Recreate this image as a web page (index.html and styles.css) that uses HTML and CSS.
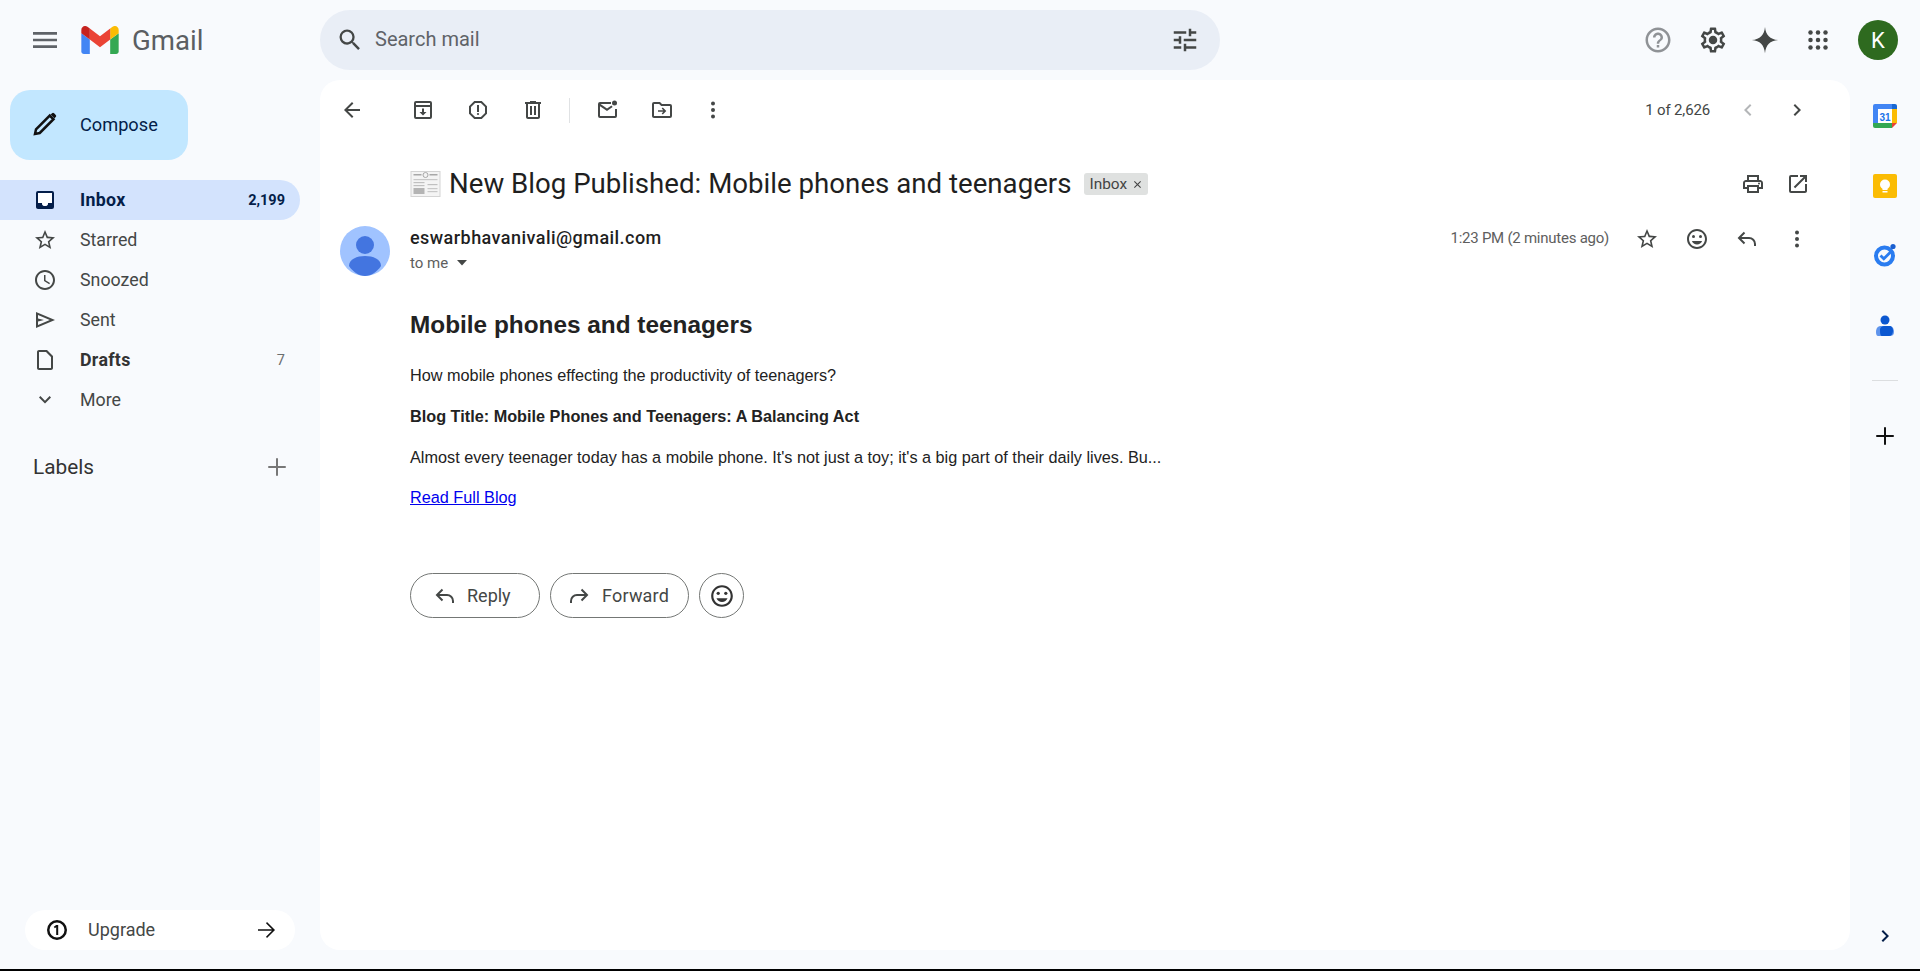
FILE: index.html
```html
<!DOCTYPE html>
<html lang="en">
<head>
<meta charset="utf-8">
<title>Gmail</title>
<link rel="stylesheet" href="styles.css">
</head>
<body>
<div class="app">
  <header class="topbar">
    <div class="brand">
      <svg class="menu" viewBox="0 0 24 24"><path d="M3 18h18v-2H3v2zm0-5h18v-2H3v2zm0-7v2h18V6H3z"/></svg>
      <svg class="logo" viewBox="52 42 88 66"><path fill="#4285f4" d="M58 108h14V74L52 59v43c0 3.32 2.69 6 6 6"/><path fill="#34a853" d="M120 108h14c3.32 0 6-2.69 6-6V59l-20 15"/><path fill="#fbbc04" d="M120 48v26l20-15v-8c0-7.42-8.47-11.65-14.4-7.2"/><path fill="#ea4335" d="M72 74V48l24 18 24-18v26L96 92"/><path fill="#c5221f" d="M52 51v8l20 15V48l-5.6-4.2c-5.94-4.45-14.4-.22-14.4 7.2"/></svg>
      <span class="wordmark">Gmail</span>
    </div>
    <div class="search">
      <svg class="ic28" viewBox="0 0 24 24"><path d="M15.5 14h-.79l-.28-.27A6.471 6.471 0 0 0 16 9.5 6.5 6.5 0 1 0 9.5 16c1.61 0 3.09-.59 4.23-1.57l.27.28v.79l5 4.99L20.49 19l-4.99-5zm-6 0C7.01 14 5 11.99 5 9.5S7.01 5 9.5 5 14 7.01 14 9.5 11.99 14 9.5 14z"/></svg>
      <span class="search-text">Search mail</span>
      <svg class="ic30" viewBox="0 0 24 24"><path d="M3 17v2h6v-2H3zM3 5v2h10V5H3zm10 16v-2h8v-2h-8v-2h-2v6h2zM7 9v2H3v2h4v2h2V9H7zm14 4v-2H11v2h10zm-6-4h2V7h4V5h-4V3h-2v6z"/></svg>
    </div>
    <div class="top-actions">
      <svg class="ic30 muted" viewBox="0 0 24 24"><path d="M11 18h2v-2h-2v2zm1-16C6.48 2 2 6.48 2 12s4.48 10 10 10 10-4.48 10-10S17.52 2 12 2zm0 18c-4.41 0-8-3.59-8-8s3.59-8 8-8 8 3.59 8 8-3.59 8-8 8zm0-14c-2.21 0-4 1.79-4 4h2c0-1.1.9-2 2-2s2 .9 2 2c0 2-3 1.75-3 5h2c0-2.25 3-2.5 3-5 0-2.21-1.79-4-4-4z"/></svg>
      <svg class="ic30 gear" viewBox="0 0 24 24"><path d="M19.43 12.98c.04-.32.07-.64.07-.98 0-.34-.03-.66-.07-.98l2.11-1.65c.19-.15.24-.42.12-.64l-2-3.46a.5.5 0 0 0-.61-.22l-2.49 1c-.52-.4-1.08-.73-1.69-.98l-.38-2.65A.488.488 0 0 0 14 2h-4c-.25 0-.46.18-.49.42l-.38 2.65c-.61.25-1.17.59-1.69.98l-2.49-1a.566.566 0 0 0-.18-.03c-.17 0-.34.09-.43.25l-2 3.46c-.13.22-.07.49.12.64l2.11 1.65c-.04.32-.07.65-.07.98 0 .33.03.66.07.98l-2.11 1.65c-.19.15-.24.42-.12.64l2 3.46a.5.5 0 0 0 .61.22l2.49-1c.52.4 1.08.73 1.69.98l.38 2.65c.03.24.24.42.49.42h4c.25 0 .46-.18.49-.42l.38-2.65c.61-.25 1.17-.59 1.69-.98l2.49 1c.06.02.12.03.18.03.17 0 .34-.09.43-.25l2-3.46c.12-.22.07-.49-.12-.64l-2.11-1.65zm-1.98-1.71c.04.31.05.52.05.73 0 .21-.02.43-.05.73l-.14 1.13.89.7 1.08.84-.7 1.21-1.27-.51-1.04-.42-.9.68c-.43.32-.84.56-1.25.73l-1.06.43-.16 1.13-.2 1.35h-1.4l-.19-1.35-.16-1.13-1.06-.43c-.43-.18-.83-.41-1.23-.71l-.91-.7-1.06.43-1.27.51-.7-1.21 1.08-.84.89-.7-.14-1.13c-.03-.31-.05-.54-.05-.74s.02-.43.05-.73l.14-1.13-.89-.7-1.08-.84.7-1.21 1.27.51 1.04.42.9-.68c.43-.32.84-.56 1.25-.73l1.06-.43.16-1.13.2-1.35h1.39l.19 1.35.16 1.13 1.06.43c.43.18.83.41 1.23.71l.91.7 1.06-.43 1.27-.51.7 1.21-1.07.85-.89.7.14 1.13z"/><circle cx="12" cy="12" r="3.4"/></svg>
      <svg class="ic30 spark" viewBox="0 0 24 24"><path d="M12 1.5c.7 6.6 3.9 9.8 10.5 10.5-6.6.7-9.800 3.900-10.500 10.500C11.300 15.900 8.100 12.700 1.500 12 8.100 11.300 11.300 8.100 12 1.500z"/></svg>
      <svg class="ic30" viewBox="0 0 24 24"><circle cx="6" cy="6" r="1.800"/><circle cx="12" cy="6" r="1.800"/><circle cx="18" cy="6" r="1.800"/><circle cx="6" cy="12" r="1.800"/><circle cx="12" cy="12" r="1.800"/><circle cx="18" cy="12" r="1.800"/><circle cx="6" cy="18" r="1.800"/><circle cx="12" cy="18" r="1.800"/><circle cx="18" cy="18" r="1.800"/></svg>
      <div class="account">K</div>
    </div>
  </header>

  <div class="workspace">
    <aside class="sidebar">
      <button class="compose">
        <svg class="ic30" viewBox="0 0 24 24"><path class="pencil" d="M4 20l.8-3.800L15.800 5.200l3 3L7.800 19.200z"/><path class="pencil-tip" d="M16.600 4.400l1-1a1.200 1.200 0 0 1 1.700 0l1.300 1.300a1.200 1.200 0 0 1 0 1.700l-1 1z"/></svg>
        <span>Compose</span>
      </button>
      <nav class="nav">
        <a class="nav-row active">
          <svg class="ic24" viewBox="0 0 24 24"><path d="M19 3H5a2 2 0 0 0-2 2v14c0 1.100.9 2 2 2h14a2 2 0 0 0 2-2V5a2 2 0 0 0-2-2zm0 12h-4a3 3 0 0 1-6 0H5V5h14v10z"/><path d="M5 5h14v10h-4a3 3 0 0 1-6 0H5z" fill="#fff"/></svg>
          <span class="nav-label">Inbox</span><span class="nav-count">2,199</span>
        </a>
        <a class="nav-row">
          <svg class="ic24" viewBox="0 0 24 24"><path d="M22 9.240l-7.190-.620L12 2 9.190 8.630 2 9.240l5.460 4.730L5.820 21 12 17.270 18.180 21l-1.630-7.030L22 9.240zM12 15.400l-3.760 2.270 1-4.280-3.320-2.880 4.380-.380L12 6.100l1.710 4.040 4.380.380-3.320 2.880 1 4.280L12 15.400z"/></svg>
          <span class="nav-label">Starred</span>
        </a>
        <a class="nav-row">
          <svg class="ic24" viewBox="0 0 24 24"><path d="M11.990 2C6.470 2 2 6.480 2 12s4.470 10 9.990 10C17.520 22 22 17.520 22 12S17.520 2 11.990 2zM12 20c-4.420 0-8-3.580-8-8s3.580-8 8-8 8 3.580 8 8-3.580 8-8 8z"/><path d="M12.500 7H11v6l5.250 3.150.750-1.230-4.500-2.670z"/></svg>
          <span class="nav-label">Snoozed</span>
        </a>
        <a class="nav-row">
          <svg class="ic24" viewBox="0 0 24 24"><path d="M3 4v16l19-8L3 4zm2 3 11.800 5H11l-6-1.500V7zm0 6.500 6-1.500h5.800L5 17v-3.500z" fill-rule="evenodd"/></svg>
          <span class="nav-label">Sent</span>
        </a>
        <a class="nav-row strong">
          <svg class="ic24" viewBox="0 0 24 24"><path d="M14 2H6c-1.100 0-1.990.9-1.990 2L4 20c0 1.100.89 2 1.990 2H18c1.100 0 2-.9 2-2V8l-6-6zM6 20V4h7l5 5v11H6z"/></svg>
          <span class="nav-label">Drafts</span><span class="nav-count thin">7</span>
        </a>
        <a class="nav-row">
          <svg class="ic24" viewBox="0 0 24 24"><path d="M16.590 8.590 12 13.170 7.410 8.590 6 10l6 6 6-6z" transform="translate(0 -.500)"/></svg>
          <span class="nav-label">More</span>
        </a>
      </nav>
      <div class="labels">
        <span>Labels</span>
        <svg class="ic30" viewBox="0 0 24 24"><path d="M19 12.800h-6.200V19h-1.600v-6.200H5v-1.600h6.200V5h1.600v6.200H19z"/></svg>
      </div>
      <div class="upgrade">
        <svg class="ic24 black" viewBox="0 0 24 24"><path d="M12 2a10 10 0 1 0 0 20 10 10 0 0 0 0-20zm0 17.500a7.500 7.500 0 1 1 0-15 7.500 7.500 0 0 1 0 15z"/><path d="M13.200 7H11.200L8.800 8.800l1 1.500 1.400-1V17h2z"/></svg>
        <span class="upgrade-label">Upgrade</span>
        <svg class="ic24 black" viewBox="0 0 24 24"><path d="M4 11.200h14l-6-6L13 4l8 8-8 8-1-1.200 6-6H4z"/></svg>
      </div>
    </aside>

    <main class="card">
      <div class="toolbar">
        <svg class="ic24 back" viewBox="0 0 24 24"><path d="M20 11H7.830l5.590-5.590L12 4l-8 8 8 8 1.410-1.410L7.830 13H20v-2z"/></svg>
        <div class="tool-group">
          <svg class="ic24" viewBox="0 0 24 24"><path d="M5 3h14a2 2 0 0 1 2 2v14a2 2 0 0 1-2 2H5a2 2 0 0 1-2-2V5a2 2 0 0 1 2-2zm0 2v2h14V5H5zm0 4v10h14V9H5z"/><path d="M11 10.500h2V14h2.500L12 17.500 8.500 14H11z"/></svg>
          <svg class="ic24" viewBox="0 0 24 24"><path d="M15.730 3H8.270L3 8.270v7.460L8.270 21h7.460L21 15.730V8.270L15.730 3zM19 14.900 14.900 19H9.100L5 14.900V9.100L9.100 5h5.800L19 9.100v5.800z"/><path d="M11 7h2v7h-2z"/><circle cx="12" cy="16" r="1.100"/></svg>
          <svg class="ic24" viewBox="0 0 24 24"><path d="M15 4V3H9v1H4v2h1v13c0 1.100.9 2 2 2h10c1.100 0 2-.9 2-2V6h1V4h-5zm2 15H7V6h10v13zM9 8h2v9H9zm4 0h2v9h-2z"/></svg>
        </div>
        <span class="tool-divider"></span>
        <div class="tool-group">
          <svg class="ic24" viewBox="0 0 24 24"><path d="M3 6a2 2 0 0 1 2-2h11v2H5.500l6.500 4.500L16.500 7.400l1.100 1.700L12 13 5 8.200V18h15v-7h2v7a2 2 0 0 1-2 2H5a2 2 0 0 1-2-2z"/><circle cx="19.500" cy="5" r="2.500"/></svg>
          <svg class="ic24" viewBox="0 0 24 24"><path d="M20 6h-8l-2-2H4a2 2 0 0 0-2 2v12c0 1.100.9 2 2 2h16a2 2 0 0 0 2-2V8a2 2 0 0 0-2-2zm0 12H4V6h5.170l2 2H20v10z"/><path d="M12.800 9.500 16.300 13l-3.500 3.500-1.100-1.100 1.600-1.600H8v-1.600h5.300l-1.600-1.600z"/></svg>
          <svg class="ic24 more-tool" viewBox="0 0 24 24"><circle cx="12" cy="5.500" r="2"/><circle cx="12" cy="12" r="2"/><circle cx="12" cy="18.500" r="2"/></svg>
        </div>
        <div class="pager">
          <span class="pager-text">1 of 2,626</span>
          <svg class="ic24 faint" viewBox="0 0 24 24"><path d="M15.410 7.410 14 6l-6 6 6 6 1.410-1.410L10.830 12z"/></svg>
          <svg class="ic24" viewBox="0 0 24 24"><path d="M10 6 8.590 7.410 13.170 12l-4.580 4.590L10 18l6-6z"/></svg>
        </div>
      </div>

      <div class="subject-row">
        <svg class="newspaper" viewBox="0 0 30 26"><rect x="0.500" y="0.500" width="29" height="25" fill="#f4f4f4" stroke="#d4d4d4"/><rect x="3" y="3" width="8" height="1.500" fill="#a8a8a8"/><circle cx="15" cy="4" r="2.500" fill="none" stroke="#a8a8a8"/><rect x="19" y="3" width="8" height="1.500" fill="#a8a8a8"/><rect x="3" y="8" width="24" height="1.200" fill="#c8c8c8"/><rect x="3" y="11" width="11" height="1.200" fill="#c0c0c0"/><rect x="3" y="14" width="11" height="1.200" fill="#c0c0c0"/><rect x="17" y="13" width="10" height="1.200" fill="#c0c0c0"/><rect x="3" y="17" width="11" height="6" fill="#b4b4b4"/><rect x="17" y="17" width="10" height="1.200" fill="#c8c8c8"/><rect x="17" y="20" width="10" height="1.200" fill="#c8c8c8"/></svg>
        <h1 class="subject">New Blog Published: Mobile phones and teenagers</h1>
        <span class="chip">Inbox<svg class="chip-x" viewBox="0 0 10 10"><path d="M1.500 1.500l7 7m0-7l-7 7"/></svg></span>
        <div class="subject-actions">
          <svg class="ic24" viewBox="0 0 24 24"><path d="M19 8h-1V3H6v5H5c-1.660 0-3 1.340-3 3v6h4v4h12v-4h4v-6c0-1.660-1.340-3-3-3zM8 5h8v3H8V5zm8 12v2H8v-4h8v2zm2-2v-2H6v2H4v-4c0-.550.450-1 1-1h14c.550 0 1 .450 1 1v4h-2z"/><circle cx="18" cy="11.500" r="1"/></svg>
          <svg class="ic24" viewBox="0 0 24 24"><path d="M19 19H5V5h7V3H5a2 2 0 0 0-2 2v14a2 2 0 0 0 2 2h14c1.100 0 2-.9 2-2v-7h-2v7zM14 3v2h3.590l-9.830 9.830 1.410 1.410L19 6.410V10h2V3h-7z"/></svg>
        </div>
      </div>

      <div class="sender-row">
        <svg class="avatar" viewBox="0 0 50 50"><circle cx="25" cy="25" r="25" fill="#a0c3ff"/><circle cx="25" cy="19" r="9" fill="#4375e0"/><path d="M9 40c0-7 8-10 16-10s16 3 16 10c-4 6-10 10-16 10S13 46 9 40z" fill="#4375e0"/></svg>
        <div class="sender-info">
          <div class="sender-name">eswarbhavanivali@gmail.com</div>
          <div class="to-me">to me<svg class="caret" viewBox="0 0 10 6"><path d="M0 0h10L5 5.500z"/></svg></div>
        </div>
        <div class="sender-actions">
          <span class="time">1:23 PM (2 minutes ago)</span>
          <svg class="ic24" viewBox="0 0 24 24"><path d="M22 9.240l-7.190-.620L12 2 9.190 8.630 2 9.240l5.460 4.730L5.820 21 12 17.270 18.180 21l-1.630-7.030L22 9.240zM12 15.400l-3.760 2.270 1-4.280-3.320-2.880 4.380-.380L12 6.100l1.710 4.040 4.380.380-3.320 2.880 1 4.280L12 15.400z"/></svg>
          <svg class="ic24" viewBox="0 0 24 24"><path d="M11.990 2C6.470 2 2 6.480 2 12s4.470 10 9.990 10C17.520 22 22 17.520 22 12S17.520 2 11.990 2zM12 20c-4.420 0-8-3.580-8-8s3.580-8 8-8 8 3.580 8 8-3.580 8-8 8z"/><circle cx="15.500" cy="9.500" r="1.500"/><circle cx="8.500" cy="9.500" r="1.500"/><path d="M12 17.500c2.330 0 4.310-1.460 5.110-3.500H6.890c.8 2.040 2.780 3.500 5.110 3.500z"/></svg>
          <svg class="ic24" viewBox="0 0 24 24"><path class="line" d="M9.500 5.500 4 11l5.500 5.500M4 11h10a6 6 0 0 1 6 6v2"/></svg>
          <svg class="ic24" viewBox="0 0 24 24"><circle cx="12" cy="5.500" r="2"/><circle cx="12" cy="12" r="2"/><circle cx="12" cy="18.500" r="2"/></svg>
        </div>
      </div>

      <article class="message">
        <h2>Mobile phones and teenagers</h2>
        <p>How mobile phones effecting the productivity of teenagers?</p>
        <p><strong>Blog Title: Mobile Phones and Teenagers: A Balancing Act</strong></p>
        <p>Almost every teenager today has a mobile phone. It's not just a toy; it's a big part of their daily lives. Bu...</p>
        <p class="last"><a class="blog-link" href="#">Read Full Blog</a></p>
      </article>

      <div class="reply-row">
        <button class="pill reply"><svg class="ic24" viewBox="0 0 24 24"><path class="line" d="M9.500 5.500 4 11l5.500 5.500M4 11h10a6 6 0 0 1 6 6v2"/></svg><span>Reply</span></button>
        <button class="pill forward"><svg class="ic24" viewBox="0 0 24 24"><path class="line" d="M14.500 5.500 20 11l-5.500 5.500M20 11H10a6 6 0 0 0-6 6v2"/></svg><span>Forward</span></button>
        <button class="pill round"><svg class="ic24 dark" viewBox="0 0 24 24"><path d="M11.990 2C6.470 2 2 6.480 2 12s4.470 10 9.990 10C17.520 22 22 17.520 22 12S17.520 2 11.990 2zM12 20c-4.420 0-8-3.580-8-8s3.580-8 8-8 8 3.580 8 8-3.580 8-8 8z"/><circle cx="15.500" cy="9.500" r="1.500"/><circle cx="8.500" cy="9.500" r="1.500"/><path d="M12 17.500c2.330 0 4.310-1.460 5.110-3.500H6.890c.8 2.040 2.780 3.500 5.110 3.500z"/></svg></button>
      </div>
    </main>

    <aside class="rail">
      <svg class="app-icon" viewBox="0 0 24 24"><path fill="#4285f4" d="M2 0h17v5H5v14H0V2a2 2 0 0 1 2-2z"/><path fill="#1967d2" d="M19 0h3a2 2 0 0 1 2 2v3h-5z"/><path fill="#fbbc04" d="M19 5h5v14h-5z"/><path fill="#34a853" d="M0 19h19v5H2a2 2 0 0 1-2-2z"/><path fill="#ea4335" d="M19 19h5l-5 5z"/><rect x="5" y="5" width="14" height="14" fill="#fff"/><text class="cal-num" x="12" y="16.500">31</text></svg>
      <svg class="app-icon" viewBox="0 0 24 24"><rect width="24" height="24" rx="2" fill="#fbbc04"/><circle cx="12" cy="10.500" r="5" fill="#fff"/><rect x="9.500" y="14" width="5" height="2" fill="#fff"/><rect x="9.500" y="17" width="5" height="1.500" fill="#fff"/></svg>
      <svg class="app-icon tasks" viewBox="0 0 24 24"><circle cx="11.500" cy="13" r="8.500" fill="none" stroke="#2a7cf0" stroke-width="4"/><path d="M7.500 12.500l3.300 3.300 7-7" fill="none" stroke="#2a7cf0" stroke-width="2.800"/><circle cx="20" cy="3.500" r="2.600" fill="#1a5fd0"/></svg>
      <svg class="app-icon" viewBox="0 0 24 24"><circle cx="12" cy="6" r="4.500" fill="#0b57d0"/><path d="M3 18c0-4 2-6 5-6h8c3 0 5 2 5 6 0 3-2 4-4 4H5c-1 0-2-1-2-4z" fill="#5f94ec"/><path d="M7 16c0-3 2-4 5-4h4c3 0 4 2 4 5 0 3-2 5-4 5H9c-1.500 0-2-2-2-6z" fill="#0b57d0"/></svg>
      <span class="rail-divider"></span>
      <svg class="ic30 black plus" viewBox="0 0 24 24"><path d="M19 12.800h-6.200V19h-1.600v-6.200H5v-1.600h6.200V5h1.600v6.200H19z"/></svg>
      <svg class="ic24 ink rail-end" viewBox="0 0 24 24"><path d="M10 6 8.590 7.410 13.170 12l-4.580 4.590L10 18l6-6z"/></svg>
    </aside>
  </div>
</div>
<div class="bottom-edge"></div>
</body>
</html>
```
FILE: styles.css
```css
* { box-sizing: border-box; }
html, body { margin: 0; height: 100%; overflow: hidden; }
body { background: #f8fafd; font-family: Roboto, "Noto Sans", sans-serif; color: #444746; }
svg { display: block; flex: none; fill: #444746; }
.ic24 { width: 24px; height: 24px; }
.ic28 { width: 28px; height: 28px; }
.ic30 { width: 30px; height: 30px; }
.line { fill: none; stroke: #444746; stroke-width: 2; }
.muted { fill: #8f9296; }
.faint { fill: #b4b6b8; }
.ink { fill: #041e49; }
.black { fill: #111; }
.dark { fill: #333; width: 26px; height: 26px; }

.app { height: 969px; display: flex; flex-direction: column; }
.bottom-edge { height: 2px; background: #000; }

.topbar { height: 80px; flex: none; display: flex; align-items: center; }
.brand { width: 320px; flex: none; display: flex; align-items: center; padding-left: 29px; }
.menu { width: 32px; height: 32px; fill: #5f6368; }
.logo { width: 38px; height: 28px; margin-left: 20px; }
.wordmark { margin-left: 13px; padding-top: 2px; font-size: 27.600px; color: #5b5e62; line-height: 30px; }
.search { width: 900px; height: 60px; border-radius: 30px; background: #e9eef6; display: flex; align-items: center; padding: 0 20px 0 16px; }
.search-text { margin-left: 11px; flex: 1; font-size: 20px; color: #5f6368; padding-bottom: 3px; }
.top-actions { flex: 1; display: flex; align-items: center; gap: 23px; padding-left: 423px; }
.gear { margin-left: 2px; }
.spark { margin-left: -1px; }
.account { width: 40px; height: 40px; margin-left: 2px; border-radius: 50%; background: #2e6a1f; color: #fff; font-size: 22px; display: flex; align-items: center; justify-content: center; }

.workspace { flex: 1; display: flex; min-height: 0; }
.sidebar { width: 320px; flex: none; display: flex; flex-direction: column; padding: 10px 20px 19px 0; }
.compose { width: 178px; height: 70px; margin-left: 10px; border: 0; border-radius: 20px; background: #c2e7ff; color: #041e49; font: 400 18.200px Roboto, sans-serif; display: flex; align-items: center; gap: 20px; padding: 0 0 2px 20px; }
.pencil { fill: none; stroke: #111; stroke-width: 2; }
.pencil-tip { fill: #111; }
.nav { margin-top: 20px; display: flex; flex-direction: column; }
.nav-row { height: 40px; display: flex; align-items: center; padding: 0 15px 0 33px; font-size: 17.800px; color: #444746; border-radius: 0 20px 20px 0; }
.nav-label { margin-left: 23px; margin-bottom: 2px; flex: 1; }
.nav-row.active { background: #d3e3fd; color: #041e49; font-weight: 700; letter-spacing: .3px; }
.nav-row.active svg { fill: #041e49; }
.nav-row.strong { font-weight: 700; color: #333; letter-spacing: .3px; }
.nav-count { font-size: 14.500px; letter-spacing: 0; }
.nav-count.thin { font-weight: 400; color: #6b6e70; }
.labels { margin-top: 32px; display: flex; justify-content: space-between; align-items: center; padding: 0 8px 0 33px; font-size: 20.800px; color: #333; }
.labels svg { fill: #777; }
.upgrade { margin: auto 5px 0 25px; height: 40px; border-radius: 20px; background: #fff; display: flex; align-items: center; padding: 0 17px 0 20px; font-size: 18px; }
.upgrade-label { margin-left: 19px; margin-bottom: 1px; flex: 1; }

.card { width: 1530px; flex: none; height: 870px; background: #fff; border-radius: 20px; display: flex; flex-direction: column; }
.toolbar { height: 60px; flex: none; display: flex; align-items: center; padding: 0 41px 0 20px; }
.back { margin-right: 47px; }
.tool-group { display: flex; gap: 31px; }
.more-tool { margin-left: -4px; }
.tool-divider { width: 1px; height: 25px; background: #e0e2e4; margin: 0 25px 0 24px; }
.pager { margin-left: auto; display: flex; align-items: center; }
.pager-text { font-size: 15px; letter-spacing: -.15px; margin-right: 26px; }
.pager svg + svg { margin-left: 25px; }

.subject-row { display: flex; align-items: center; height: 46px; margin-top: 21px; padding: 0 40px 0 90px; }
.newspaper { width: 31px; height: 26px; }
.subject { margin: 0 0 0 8px; font-weight: 400; font-size: 27.660px; color: #1f1f1f; white-space: nowrap; line-height: 36px; }
.chip { margin-left: 12px; height: 22px; padding: 0 6px; background: #dfe1e0; border-radius: 3px; font-size: 15.400px; color: #444; display: flex; align-items: center; gap: 6px; }
.chip-x { width: 9px; height: 9px; stroke: #444; stroke-width: 1.200; fill: none; }
.subject-actions { margin-left: auto; display: flex; gap: 21px; }

.sender-row { display: flex; margin-top: 19px; padding: 0 41px 0 20px; }
.avatar { width: 50px; height: 50px; }
.sender-info { margin-left: 20px; }
.sender-name { font-size: 18px; font-weight: 500; color: #1f1f1f; letter-spacing: .45px; line-height: 23px; }
.to-me { font-size: 15px; color: #5e5e5e; margin-top: 5px; display: flex; align-items: center; line-height: 18px; }
.caret { width: 10px; height: 6px; margin-left: 9px; }
.sender-actions { margin-left: auto; display: flex; align-items: flex-start; gap: 26px; height: 26px; padding-top: 1px; }
.time { font-size: 15px; letter-spacing: -.25px; color: #5e5e5e; line-height: 22px; }

.message { padding: 0 0 0 90px; margin-top: 35px; font-family: "Liberation Sans", Arial, sans-serif; font-size: 16.250px; color: #222; }
.message h2 { margin: 0; font-size: 24.375px; line-height: 28px; font-weight: 700; color: #222; }
.message p { margin: 23px 0 0; line-height: 18px; }
.message h2 + p { margin-top: 27px; }
.message p.last { margin-top: 22px; }
.blog-link { color: #00e; text-decoration: underline; }

.reply-row { display: flex; gap: 10px; padding-left: 90px; margin-top: 67px; }
.pill { height: 45px; border-radius: 23px; border: 1px solid #747775; background: #fff; color: #444746; font: 400 18px Roboto, sans-serif; display: flex; align-items: center; padding: 0; }
.reply { width: 130px; padding-left: 22px; gap: 10px; }
.forward { width: 139px; padding-left: 16px; gap: 11px; letter-spacing: .2px; }
.round { width: 45px; justify-content: center; }

.rail { flex: 1; display: flex; flex-direction: column; align-items: center; padding-top: 24px; }
.app-icon { width: 24px; height: 24px; margin-bottom: 46px; }
.tasks { margin-top: -1px; margin-bottom: 47px; }
.cal-num { font: 700 10px "Liberation Sans", sans-serif; fill: #1a73e8; text-anchor: middle; }
.rail-divider { width: 26px; height: 1px; background: #dcdee0; margin-top: -4px; }
.plus { margin-top: 40px; }
.rail-end { margin-top: auto; margin-bottom: 21px; }
```
